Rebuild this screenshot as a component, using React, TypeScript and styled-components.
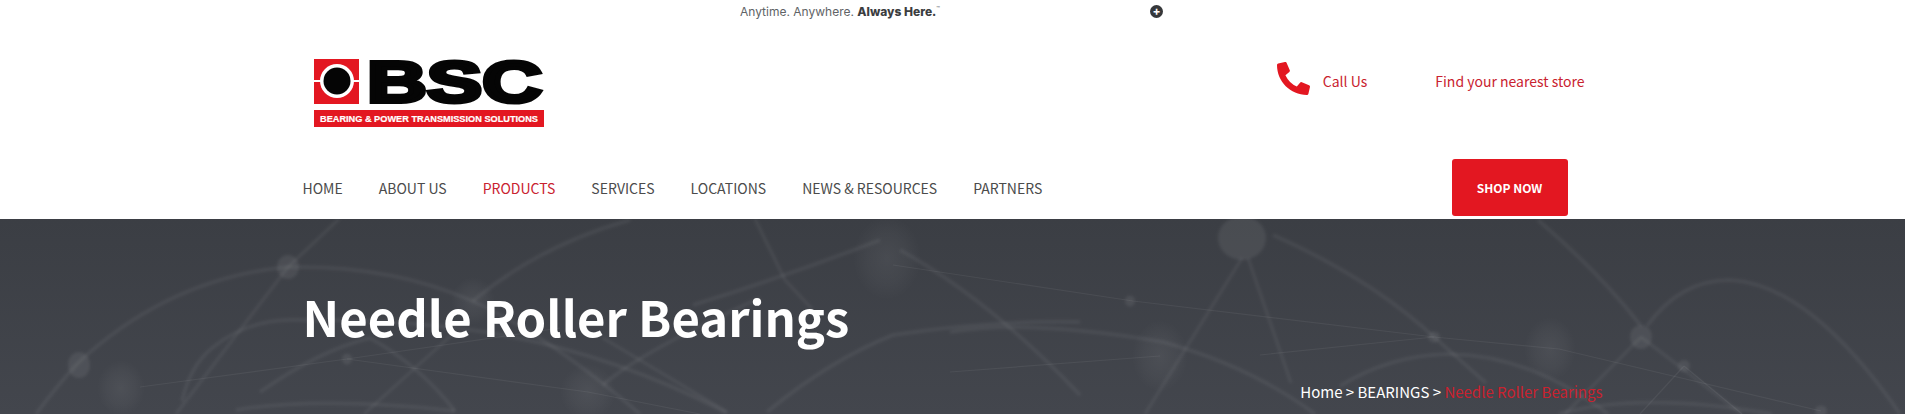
import * as React from 'react'
import styled, { createGlobalStyle } from 'styled-components'
import { FaPhoneAlt } from 'react-icons/fa'

const RED = '#e31721'
const TEXT_RED = '#c9222f'

const GlobalStyle = createGlobalStyle`
  html, body {
    margin: 0;
    padding: 0;
    background: #fff;
    overflow: hidden;
  }

  body {
    font-family: "Noto Sans CJK SC", "Noto Sans", sans-serif;
  }
`

const Page = styled.div`
  width: 1905px;
  height: 414px;
  overflow: hidden;
`

const TopStrip = styled.div`
  height: 22px;
  display: flex;
  align-items: center;
  padding-left: 740px;
  gap: 209px;
  font-family: Inter, sans-serif;
  font-size: 12px;
  color: #606366;
`

const Tagline = styled.span`
  width: 201px;
  white-space: nowrap;

  strong {
    font-weight: 800;
    color: #3b3d40;
  }

  sup {
    font-size: 6px;
    line-height: 0;
  }
`

const PlusBadge = styled.span`
  width: 13px;
  height: 13px;
  border-radius: 50%;
  background: #35373a;
  color: #fff;
  display: flex;
  align-items: center;
  justify-content: center;
  font-size: 12px;
  font-weight: 700;
  line-height: 1;
`

const Container = styled.div`
  width: 1300px;
  margin: 0 auto;
`

const BrandRow = styled(Container)`
  height: 137px;
  box-sizing: border-box;
  padding: 23px 18px 0 11px;
  display: flex;
  justify-content: space-between;
  align-items: flex-start;
`

const LogoArt = styled.svg`
  display: block;
  flex: none;
`

const Contact = styled.div`
  display: flex;
  align-items: center;
  margin-top: 12px;
  height: 47px;
`

const PhoneIcon = styled(FaPhoneAlt)`
  color: ${RED};
  width: 33px;
  height: 33px;
  margin: -5px 13px 0 0;
`

const ContactLink = styled.a<{ $gap?: number }>`
  font-size: 14px;
  color: ${TEXT_RED};
  margin-left: ${(p) => p.$gap ?? 0}px;
`

const NavRow = styled(Container)`
  height: 60px;
  display: flex;
  justify-content: space-between;
  align-items: flex-start;
  padding-right: 35px;
  box-sizing: border-box;
`

const NavList = styled.nav`
  display: flex;
  gap: 36px;
  padding-top: 18px;
`

const NavLink = styled.a<{ $active?: boolean }>`
  font-size: 14px;
  line-height: 22px;
  color: ${(p) => (p.$active ? TEXT_RED : '#4b4b4b')};
  white-space: nowrap;
`

const ShopButton = styled.a`
  width: 116px;
  height: 57px;
  border-radius: 3px;
  background: ${RED};
  color: #fff;
  font-size: 12px;
  font-weight: 700;
  display: flex;
  align-items: center;
  justify-content: center;
  padding-bottom: 1px;
  box-sizing: border-box;
`

const Hero = styled.section`
  position: relative;
  height: 195px;
  background: linear-gradient(180deg, #3b3e44 0%, #43464d 100%);
  overflow: hidden;
`

const HeroArt = styled.svg`
  position: absolute;
  inset: 0;
  width: 100%;
  height: 100%;
`

const HeroInner = styled(Container)`
  position: relative;
  height: 100%;
  display: flex;
  flex-direction: column;
`

const Title = styled.h1`
  margin: 58px 0 0;
  font-size: 49px;
  line-height: 78px;
  font-weight: 700;
  color: #fff;
`

const Breadcrumb = styled.div`
  margin-top: 25px;
  align-self: flex-end;
  font-size: 15px;
  line-height: 24px;
  color: #fff;
  white-space: nowrap;

  span {
    color: ${TEXT_RED};
  }
`

const curves = [
  'M36 414 Q60 382 79 362 Q170 278 288 267 Q390 265 470 300 Q545 333 640 414',
  'M182 401 Q190 366 212 348 Q250 317 303 320 Q400 319 485 332 Q610 352 727 413',
  'M260 392 Q320 350 370 338 Q420 366 455 411',
  'M236 410 Q320 396 455 411',
  'M473 301 Q540 245 630 220',
  'M603 385 Q640 352 760 298',
  'M693 305 Q790 275 880 240',
  'M900 250 Q990 300 1080 395',
  'M767 412 Q830 360 893 335 Q990 320 1080 322',
  'M1273 235 Q1370 278 1434 337 L1486 383',
  'M1647 326 Q1680 280 1730 280 Q1810 284 1900 414',
  'M1340 386 Q1390 355 1449 354 Q1530 355 1608 414',
  'M950 332 Q1029 319 1163 342 Q1250 366 1315 414',
  'M1559 414 Q1640 391 1772 414',
  'M1538 220 Q1600 273 1641 326',
]

const straights = [
  'M288 267 L339 219',
  'M288 267 L176 414',
  'M364 414 L455 332',
  'M603 338 L727 412',
  'M755 219 L785 280 L812 309',
  'M1242 258 L1145 414',
  'M1248 258 L1291 383',
  'M1641 337 L1565 414',
  'M1641 337 L1742 414',
]

const thinLines = [
  'M140 387 L347 359 L560 328',
  'M347 359 L588 392 L700 414',
  'M893 265 L1133 301 L1434 337',
  'M1434 337 L1559 349 L1821 411',
  'M1260 355 L1434 337',
  'M950 372 L1160 356',
  'M1684 366 L1640 414',
  'M1684 366 L1742 414',
]

const nodes: [number, number, number, number][] = [
  [288, 267, 11, 12],
  [79, 365, 11, 13],
  [347, 359, 5, 5.5],
  [1242, 238, 24, 22],
  [1641, 337, 11, 12],
  [1434, 337, 6, 5.5],
  [1130, 301, 5, 5.5],
  [1684, 366, 6, 6],
  [1821, 411, 6, 5.5],
]

const glows: [number, number, number, number][] = [
  [121, 388, 24, 28],
  [473, 301, 22, 24],
  [588, 392, 28, 28],
  [887, 258, 34, 42],
  [1160, 356, 28, 36],
  [1550, 349, 26, 32],
]

function NetworkArt() {
  return (
    <HeroArt viewBox="0 219 1905 195" preserveAspectRatio="none" aria-hidden="true">
      <defs>
        <radialGradient id="glow">
          <stop offset="0%" stopColor="#fff" stopOpacity="0.06" />
          <stop offset="60%" stopColor="#fff" stopOpacity="0.03" />
          <stop offset="100%" stopColor="#fff" stopOpacity="0" />
        </radialGradient>
        <filter id="soft">
          <feGaussianBlur stdDeviation="1.5" />
        </filter>
      </defs>
      {glows.map(([cx, cy, rx, ry]) => (
        <ellipse key={`${cx}-${cy}`} cx={cx} cy={cy} rx={rx} ry={ry} fill="url(#glow)" />
      ))}
      <g fill="none" stroke="#fff" strokeOpacity="0.06" filter="url(#soft)">
        {curves.map((d) => (
          <path key={d} d={d} strokeWidth="3.5" />
        ))}
        {straights.map((d) => (
          <path key={d} d={d} strokeWidth="3" />
        ))}
      </g>
      <g fill="none" stroke="#fff" strokeOpacity="0.06">
        {thinLines.map((d) => (
          <path key={d} d={d} strokeWidth="1.2" />
        ))}
      </g>
      <g filter="url(#soft)">
        {nodes.map(([cx, cy, rx, ry]) => (
          <ellipse key={`${cx}-${cy}`} cx={cx} cy={cy} rx={rx} ry={ry} fill="#fff" fillOpacity="0.07" />
        ))}
      </g>
    </HeroArt>
  )
}

function Logo() {
  return (
    <LogoArt width="230" height="82" viewBox="0 -14 230 82" role="img" aria-label="BSC">
      <rect x="0" y="0" width="45" height="45" fill={RED} />
      <rect x="0" y="21" width="45" height="2" fill="#fff" />
      <circle cx="23" cy="22" r="17" fill="#fff" />
      <circle cx="23" cy="22" r="13.5" fill="#050505" />
      <text
        x="53"
        y="43"
        textLength="175"
        lengthAdjust="spacingAndGlyphs"
        fontFamily="Liberation Sans, sans-serif"
        fontWeight="700"
        fontSize="57"
        fill="#050505"
        stroke="#050505"
        strokeWidth="4"
      >
        BSC
      </text>
      <rect x="0" y="51" width="230" height="17" fill={RED} />
      <text
        x="6"
        y="63"
        textLength="218"
        lengthAdjust="spacingAndGlyphs"
        fontFamily="Liberation Sans, sans-serif"
        fontWeight="700"
        fontSize="9"
        fill="#fff"
        stroke="#fff"
        strokeWidth="0.2"
      >
        BEARING &amp; POWER TRANSMISSION SOLUTIONS
      </text>
    </LogoArt>
  )
}

const navItems = ['HOME', 'ABOUT US', 'PRODUCTS', 'SERVICES', 'LOCATIONS', 'NEWS & RESOURCES', 'PARTNERS']

export default function App() {
  return (
    <Page>
      <GlobalStyle />
      <TopStrip>
        <Tagline>
          Anytime. Anywhere. <strong>Always Here.</strong>
          <sup>™</sup>
        </Tagline>
        <PlusBadge>+</PlusBadge>
      </TopStrip>
      <BrandRow>
        <Logo />
        <Contact>
          <PhoneIcon />
          <ContactLink>Call Us</ContactLink>
          <ContactLink $gap={68}>Find your nearest store</ContactLink>
        </Contact>
      </BrandRow>
      <NavRow>
        <NavList>
          {navItems.map((item) => (
            <NavLink key={item} $active={item === 'PRODUCTS'}>
              {item}
            </NavLink>
          ))}
        </NavList>
        <ShopButton>SHOP NOW</ShopButton>
      </NavRow>
      <Hero>
        <NetworkArt />
        <HeroInner>
          <Title>Needle Roller Bearings</Title>
          <Breadcrumb>
            Home &gt; BEARINGS &gt; <span>Needle Roller Bearings</span>
          </Breadcrumb>
        </HeroInner>
      </Hero>
    </Page>
  )
}
